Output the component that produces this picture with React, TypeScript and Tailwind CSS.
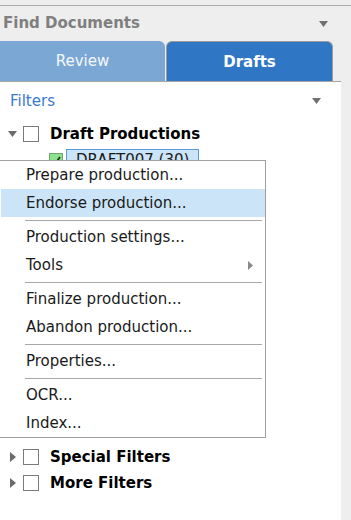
import React from "react";

const font = { fontFamily: '"DejaVu Sans", Verdana, sans-serif' };

function Caret({ className = "" }: { className?: string }) {
  return (
    <svg width="9" height="6" viewBox="0 0 9 6" className={className}>
      <path d="M0 0 H9 L4.5 6 Z" fill="#707070" />
    </svg>
  );
}

function Arrow({ open }: { open?: boolean }) {
  return open ? (
    <svg width="9" height="6" viewBox="0 0 9 6">
      <path d="M0 0 H9 L4.5 6 Z" fill="#6b6b6b" />
    </svg>
  ) : (
    <svg width="6" height="10" viewBox="0 0 6 10">
      <path d="M0 0 V10 L6 5 Z" fill="#6b6b6b" />
    </svg>
  );
}

function Box() {
  return <div className="w-[16px] h-[16px] border border-[#7a7a7a] bg-white" />;
}

function TreeRow({ label, open }: { label: string; open?: boolean }) {
  return (
    <div className="flex items-center h-[26px]">
      <div className="w-[23px] flex justify-center pl-[2px]">
        <Arrow open={open} />
      </div>
      <Box />
      <span className="ml-[11px] text-[15px] font-bold text-black">{label}</span>
    </div>
  );
}

function Item({ label, active, sub }: { label: string; active?: boolean; sub?: boolean }) {
  return (
    <div
      className={`flex items-center h-[28px] pl-[25px] pr-[12px] text-[15px] text-[#1a1a1a] ${
        active ? "bg-[#cce4f7]" : ""
      }`}
    >
      <span className="flex-1">{label}</span>
      {sub && (
        <svg width="5" height="9" viewBox="0 0 5 9">
          <path d="M0 0 V9 L5 4.5 Z" fill="#8a8a8a" />
        </svg>
      )}
    </div>
  );
}

function Sep() {
  return (
    <div className="h-[6px] flex items-center pl-[24px] pr-[3px]">
      <div className="h-px w-full bg-[#a8a8a8]" />
    </div>
  );
}

export default function App() {
  return (
    <div className="relative w-[351px] h-[520px] overflow-hidden bg-[#eeeeee]" style={font}>
      <div className="h-[5px]" />
      <div className="border-t border-[#ababab] h-[36px] flex items-center justify-between pl-[3px] pr-[23px]">
        <span className="text-[15px] font-bold text-[#7f7f7f]">Find Documents</span>
        <Caret />
      </div>
      <div className="flex h-[40px] w-[333px] items-end">
        <div className="w-[165px] h-full rounded-tr-[6px] bg-[#7ba7d5] flex items-center justify-center text-[15px] text-[#f4f8fc] pt-[1px]">
          Review
        </div>
        <div className="ml-[1px] w-[167px] h-full rounded-t-[6px] border border-b-0 border-[#9a9a9a] bg-[#2f77c4] flex items-center justify-center text-[15px] font-bold text-white pt-[1px]">
          Drafts
        </div>
      </div>
      <div className="w-[341px] h-[439px] bg-white border-t border-[#a6a6a6]">
        <div className="h-[37px] flex items-center justify-between pl-[10px] pr-[20px] pt-[1px]">
          <span className="text-[15px] text-[#3a7ad2]">Filters</span>
          <Caret />
        </div>
        <div className="mt-[2px]">
          <TreeRow label="Draft Productions" open />
        </div>
        <div className="flex items-center h-[24px] pl-[49px] pt-[2px]">
          <div className="w-[14px] h-[14px] bg-[#8fe08f] border border-[#6aa86a] flex items-center justify-center">
            <svg width="10" height="9" viewBox="0 0 10 9">
              <path d="M1 5 L4 8 L9 1" stroke="#1d3b1d" strokeWidth="2" fill="none" />
            </svg>
          </div>
          <div className="ml-[3px] h-[22px] w-[133px] border border-[#5a9ad6] bg-[#cce4f7] flex items-center pl-[9px] text-[15px] text-[#1a1a1a]">
            DRAFT007 (30)
          </div>
        </div>
        <div className="h-[273px]" />
        <TreeRow label="Special Filters" />
        <TreeRow label="More Filters" />
      </div>

      <div className="absolute left-[-2px] top-[160px] w-[268px] bg-white border border-[#a0a0a0] pl-[2px]">
        <Item label="Prepare production..." />
        <Item label="Endorse production..." active />
        <Sep />
        <Item label="Production settings..." />
        <Item label="Tools" sub />
        <Sep />
        <Item label="Finalize production..." />
        <Item label="Abandon production..." />
        <Sep />
        <Item label="Properties..." />
        <Sep />
        <Item label="OCR..." />
        <Item label="Index..." />
      </div>
      <div className="absolute right-0 top-[81px] w-[10px] h-[439px] bg-[#eeeeee]" />
    </div>
  );
}
